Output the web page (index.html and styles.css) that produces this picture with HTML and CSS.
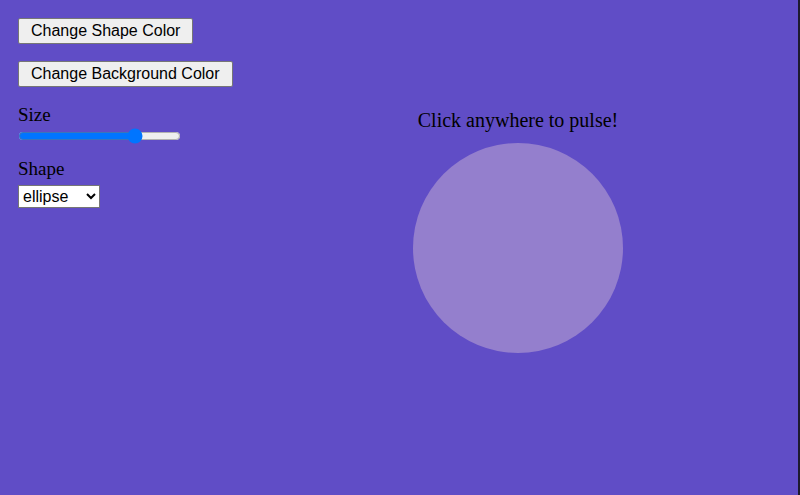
FILE: index.html
```html
<!DOCTYPE html>
<html>
<head>
<meta charset="utf-8">
<link rel="stylesheet" href="styles.css">
</head>
<body>
<div class="app">
  <div class="controls">
    <button class="btn">Change Shape Color</button>
    <button class="btn">Change Background Color</button>
    <label class="label">Size</label>
    <input class="slider" type="range" min="0" max="100" value="74">
    <label class="label">Shape</label>
    <select class="select"><option>ellipse</option><option>rectangle</option></select>
  </div>
  <div class="stage">
    <div class="hint">Click anywhere to pulse!</div>
    <div class="shape"></div>
  </div>
</div>
</body>
</html>
```
FILE: styles.css
```css
html, body {
  margin: 0;
  padding: 0;
  height: 100%;
}
body {
  background: #604dc6;
  font-family: "Liberation Serif", serif;
  color: #000;
}
.app {
  display: flex;
  height: 100%;
  box-sizing: border-box;
  border-right: 2px solid #1d1a2e;
}
.controls {
  display: flex;
  flex-direction: column;
  align-items: flex-start;
  padding: 18px;
  width: 202px;
  flex: none;
}
.btn {
  font-family: "Liberation Sans", Arial, sans-serif;
  font-size: 16px;
  white-space: nowrap;
  padding: 1px 12px;
  height: 26px;
  background: #efefef;
  border: 1px solid #767676;
  border-radius: 2px;
  color: #000;
  margin-bottom: 17px;
}
.label {
  font-size: 19px;
  line-height: 20px;
  margin-top: 1px;
}
.slider {
  width: 163px;
  margin: 3px 0 14px 0;
  accent-color: #0075ff;
}
.select {
  font-family: "Liberation Sans", Arial, sans-serif;
  font-size: 16px;
  width: 82px;
  height: 23px;
  margin-top: 6px;
  background: #fff;
  border: 1px solid #767676;
  border-radius: 0;
  color: #000;
}
.stage {
  flex: 1;
  display: flex;
  flex-direction: column;
  align-items: center;
  padding-top: 108px;
}
.hint {
  font-size: 20px;
  line-height: 24px;
  margin-bottom: 11px;
}
.shape {
  width: 210px;
  height: 210px;
  border-radius: 50%;
  background: #947fcd;
}
```
